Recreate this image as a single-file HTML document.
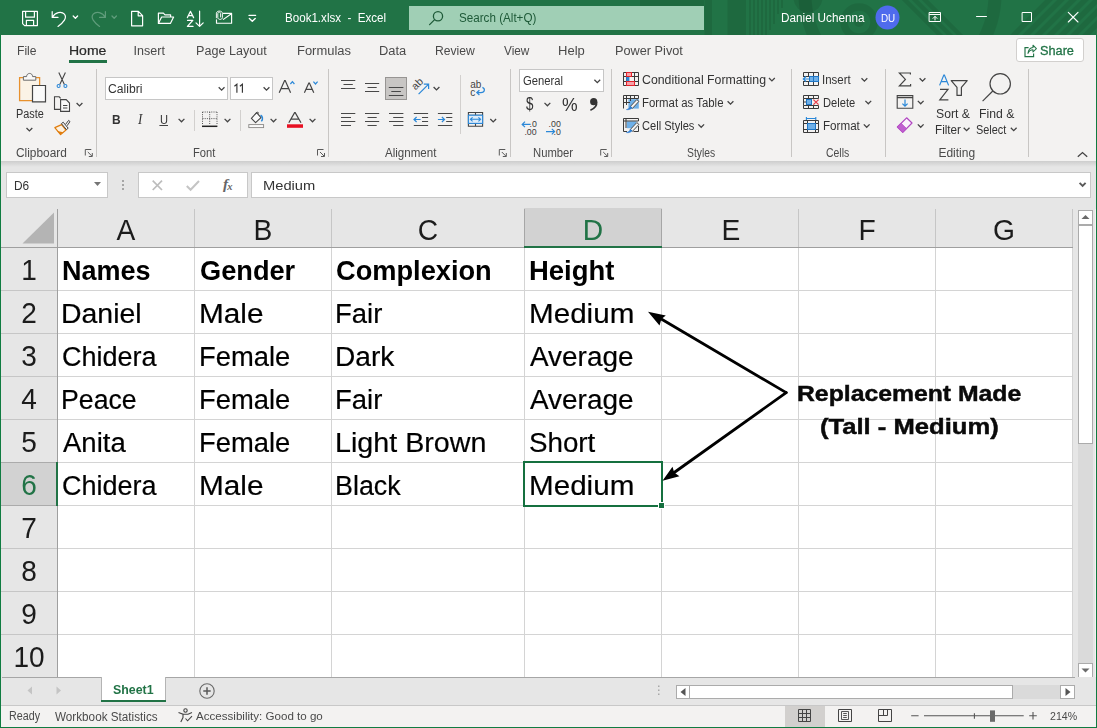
<!DOCTYPE html>
<html><head><meta charset="utf-8"><title>Book1.xlsx - Excel</title>
<style>
*{box-sizing:border-box;margin:0;padding:0}
html,body{width:1097px;height:728px;overflow:hidden;background:#f3f2f1;font-family:"Liberation Sans",sans-serif;}
#win{position:relative;width:1097px;height:728px;overflow:hidden;background:#f3f2f1}
.a{position:absolute}
.t{position:absolute;white-space:pre;line-height:1;transform-origin:0 50%;color:#262626}
.gs{position:absolute;left:0;top:0;width:1097px;height:728px;will-change:transform}
svg{position:absolute;overflow:visible}
.sep{position:absolute;width:1px;background:#c8c6c4}
.box{position:absolute;background:#fff;border:1px solid #c6c6c6}
.gl{position:absolute;background:#d4d4d4}
</style></head><body><div id="win">

<!-- ===== title bar ===== -->
<div class="a" style="left:0;top:0;width:1097px;height:35px;background:#217346"></div>
<div class="a" style="left:409px;top:6px;width:295px;height:24px;background:#a0cfb5"></div>
<svg style="left:0;top:0" width="1097" height="35"><defs><clipPath id="tbc"><rect x="0" y="0" width="1097" height="35"/></clipPath></defs>
<g clip-path="url(#tbc)" fill="rgba(0,0,0,.085)" stroke="none">
<rect x="640" y="0" width="64" height="6"/><rect x="704.5" y="0" width="7.5" height="35"/><rect x="727.5" y="0" width="18.5" height="35"/>
<rect x="749" y="0" width="2" height="35"/><rect x="753" y="0" width="2" height="35"/><rect x="757" y="0" width="2" height="35"/><rect x="761" y="0" width="2" height="35"/><rect x="765" y="0" width="2" height="35"/><rect x="769" y="0" width="2" height="30"/><rect x="773" y="0" width="2" height="24"/><rect x="777" y="0" width="2" height="14"/><rect x="781" y="0" width="2" height="8"/>
<circle cx="808" cy="-2" r="14.5"/>
<circle cx="859" cy="22" r="5"/>
<g fill="none" stroke="rgba(0,0,0,.085)"><circle cx="859" cy="22" r="15" stroke-width="7.5"/>
<circle cx="900" cy="-5" r="95" stroke-width="13"/>
<path d="M903 -2L942 37M913 -2L952 37M923 -2L962 37" stroke-width="4.5"/>
<path d="M1012 37L1051 -2M1024 37L1063 -2M1036 37L1075 -2M1048 37L1087 -2M1060 37L1099 -2M1072 37L1111 -2M1084 37L1123 -2" stroke-width="5.5"/></g>
</g></svg>
<svg style="left:0;top:0" width="1097" height="35"><g fill="none" stroke="#fff" stroke-width="1.2" stroke-linejoin="round" stroke-linecap="round">
<!-- save -->
<path d="M22.6 11.4H37.4V25.6H24.6L22.6 23.6ZM25.6 11.4V17.2H34.4V11.4M26.4 25.6V20.4H33.6V25.6"/>
<!-- undo -->
<path d="M52.2 11.6V17.4H58M52.4 17.2C55 12.4 61.4 10.8 64.4 14.2C67.4 17.8 63.6 22.2 58 26.4"/>
<path d="M73.2 16L75.4 18.2L77.6 16" stroke-width="1.3"/>
<!-- redo dim -->
<g stroke="#5f9c7b"><path d="M105.4 11.6V17.4H99.6M105.2 17.2C102.6 12.4 96.2 10.8 93.2 14.2C90.2 17.8 94 22.2 99.6 26.4"/><path d="M112 16L114.2 18.2L116.4 16" stroke-width="1.3"/></g>
<!-- new -->
<path d="M131.6 11.4H138.4L142.6 15.6V25.8H131.6ZM138.2 11.6V15.8H142.4"/>
<!-- open -->
<path d="M158.4 23.4V13.2H163.4L165 14.8H170.6V17M158.4 23.4L161.6 17H173.6L170.4 23.4Z"/>
<!-- sort az -->
<path d="M199.6 11.2V26.2M196 22.8L199.6 26.4L203.2 22.8"/>
<path d="M187.4 17.6L190.4 11.4L193.6 17.6M188.4 15.6H192.6M187.6 20.4H192.8L187.4 26.4H193" stroke-width="1.25"/>
<!-- mail attach -->
<path d="M223.4 13.4H231.6V23.2H216.5V19.8M223.4 19.4L231.4 13.8" stroke-width="1.15"/>
<path d="M220.6 17V13.6C220.6 11.6 217.8 11.6 217.8 13.6V17.6C217.8 20 222.4 20 222.4 17.6V13.2C222.4 10.4 216.4 10.4 216.4 13.2V17.8" stroke-width="0.95"/>
<!-- customize -->
<path d="M249 15.4H255.6" stroke-width="1.3"/><path d="M249.4 18.4L252.3 21.2L255.2 18.4" stroke-width="1.4"/>
<!-- search -->
<g stroke="#1e5a38" stroke-width="1.3"><circle cx="438" cy="16.2" r="4.6"/><path d="M434.6 19.6L429.6 24.6"/></g>
<!-- window controls -->
<path d="M929.5 12.5H940.5V21.5H929.5ZM929.5 14.5H940.5M935 20V16.6M933 18.4L935 16.4L937 18.4" stroke-width="1"/>
<path d="M976.5 16.5H986.5" stroke-width="1"/>
<path d="M1022.5 12.5H1031.5V21.5H1022.5Z" stroke-width="1"/>
<path d="M1068.3 12.3L1078 22M1078 12.3L1068.3 22" stroke-width="1.1"/>
</g>
<circle cx="887.5" cy="17.5" r="12" fill="#4f6bed"/>
</svg>


<!-- ===== ribbon ===== -->
<div class="a" style="left:0;top:35px;width:1097px;height:126px;background:#f3f2f1"></div>
<div class="a" style="left:69px;top:60px;width:38px;height:3px;background:#217346"></div>
<div class="a" style="left:1016px;top:38px;width:68px;height:24px;background:#fff;border:1px solid #d2d0ce;border-radius:3px"></div>
<div class="sep" style="left:96px;top:69px;height:88px"></div>
<div class="sep" style="left:328px;top:69px;height:88px"></div>
<div class="sep" style="left:510px;top:69px;height:88px"></div>
<div class="sep" style="left:611px;top:69px;height:88px"></div>
<div class="sep" style="left:791px;top:69px;height:88px"></div>
<div class="sep" style="left:885px;top:69px;height:88px"></div>
<div class="sep" style="left:1028px;top:69px;height:88px"></div>
<div class="sep" style="left:194px;top:110px;height:21px;background:#d2d0ce"></div>
<div class="sep" style="left:240px;top:110px;height:21px;background:#d2d0ce"></div>
<div class="sep" style="left:460px;top:75px;height:59px;background:#d2d0ce"></div>
<div class="box" style="left:105px;top:77px;width:123px;height:23px"></div>
<div class="box" style="left:230px;top:77px;width:43px;height:23px"></div>
<div class="box" style="left:519px;top:69px;width:85px;height:23px"></div>
<div class="a" style="left:385px;top:77px;width:22px;height:23px;background:#c8c6c4;border:1px solid #979593"></div>
<svg style="left:0;top:0" width="1097" height="165">

<!-- chevrons -->
<path d="M-2.9 -1.4L0 1.5L2.9 -1.4" fill="none" stroke="#444" stroke-width="1.3" transform="translate(29.4 129.4)"/><path d="M-2.9 -1.4L0 1.5L2.9 -1.4" fill="none" stroke="#444" stroke-width="1.3" transform="translate(79.5 104.4)"/>
<path d="M-2.9 -1.4L0 1.5L2.9 -1.4" fill="none" stroke="#444" stroke-width="1.3" transform="translate(221.6 88.7)"/><path d="M-2.9 -1.4L0 1.5L2.9 -1.4" fill="none" stroke="#444" stroke-width="1.3" transform="translate(266.5 88.7)"/>
<path d="M-2.9 -1.4L0 1.5L2.9 -1.4" fill="none" stroke="#444" stroke-width="1.3" transform="translate(181.5 120.3)"/><path d="M-2.9 -1.4L0 1.5L2.9 -1.4" fill="none" stroke="#444" stroke-width="1.3" transform="translate(227.5 120.3)"/><path d="M-2.9 -1.4L0 1.5L2.9 -1.4" fill="none" stroke="#444" stroke-width="1.3" transform="translate(273.5 120.3)"/><path d="M-2.9 -1.4L0 1.5L2.9 -1.4" fill="none" stroke="#444" stroke-width="1.3" transform="translate(312.5 120.3)"/>
<path d="M-2.9 -1.4L0 1.5L2.9 -1.4" fill="none" stroke="#444" stroke-width="1.3" transform="translate(436.5 88.4)"/><path d="M-2.9 -1.4L0 1.5L2.9 -1.4" fill="none" stroke="#444" stroke-width="1.3" transform="translate(493.2 120.4)"/>
<path d="M-2.9 -1.4L0 1.5L2.9 -1.4" fill="none" stroke="#444" stroke-width="1.3" transform="translate(597.3 81.2)"/><path d="M-2.9 -1.4L0 1.5L2.9 -1.4" fill="none" stroke="#444" stroke-width="1.3" transform="translate(547.4 104.3)"/>
<path d="M-2.9 -1.4L0 1.5L2.9 -1.4" fill="none" stroke="#444" stroke-width="1.3" transform="translate(771.9 79.4)"/><path d="M-2.9 -1.4L0 1.5L2.9 -1.4" fill="none" stroke="#444" stroke-width="1.3" transform="translate(730.5 102.6)"/><path d="M-2.9 -1.4L0 1.5L2.9 -1.4" fill="none" stroke="#444" stroke-width="1.3" transform="translate(701.2 125.8)"/>
<path d="M-2.9 -1.4L0 1.5L2.9 -1.4" fill="none" stroke="#444" stroke-width="1.3" transform="translate(864.4 79.6)"/><path d="M-2.9 -1.4L0 1.5L2.9 -1.4" fill="none" stroke="#444" stroke-width="1.3" transform="translate(868.3 102.3)"/><path d="M-2.9 -1.4L0 1.5L2.9 -1.4" fill="none" stroke="#444" stroke-width="1.3" transform="translate(866.7 125.8)"/>
<path d="M-2.9 -1.4L0 1.5L2.9 -1.4" fill="none" stroke="#444" stroke-width="1.3" transform="translate(922.5 79.6)"/><path d="M-2.9 -1.4L0 1.5L2.9 -1.4" fill="none" stroke="#444" stroke-width="1.3" transform="translate(920.7 102.3)"/><path d="M-2.9 -1.4L0 1.5L2.9 -1.4" fill="none" stroke="#444" stroke-width="1.3" transform="translate(920.7 125.8)"/>
<path d="M-2.9 -1.4L0 1.5L2.9 -1.4" fill="none" stroke="#444" stroke-width="1.3" transform="translate(966.6 129.2)"/><path d="M-2.9 -1.4L0 1.5L2.9 -1.4" fill="none" stroke="#444" stroke-width="1.3" transform="translate(1013.7 129.2)"/>
<!-- dialog launchers -->
<path d="M-3.5 2.5V-3.5H2.5M-1 -1L3.2 3.2M0 3.5H3.5V0" fill="none" stroke="#5a5a5a" stroke-width="1" transform="translate(88.8 153)"/><path d="M-3.5 2.5V-3.5H2.5M-1 -1L3.2 3.2M0 3.5H3.5V0" fill="none" stroke="#5a5a5a" stroke-width="1" transform="translate(321 153)"/><path d="M-3.5 2.5V-3.5H2.5M-1 -1L3.2 3.2M0 3.5H3.5V0" fill="none" stroke="#5a5a5a" stroke-width="1" transform="translate(502.8 153)"/><path d="M-3.5 2.5V-3.5H2.5M-1 -1L3.2 3.2M0 3.5H3.5V0" fill="none" stroke="#5a5a5a" stroke-width="1" transform="translate(604.2 153)"/>
<!-- collapse ribbon -->
<path d="M1077.8 156.8L1082.5 152.6L1087.2 156.8" fill="none" stroke="#444" stroke-width="1.3"/>
<!-- ===== clipboard ===== -->
<path d="M23.5 77.6H19.6V100.6H32M36 77.6H39.6V85" fill="none" stroke="#e8912d" stroke-width="1.3"/>
<path d="M21 79H38.5V85H32V99.4H21Z" fill="#fbf3e6"/>
<path d="M23.4 80.2V76.6H26.6C26.6 72.4 32.6 72.4 32.6 76.6H35.8V80.2Z" fill="#f8f8f8" stroke="#6a6a6a" stroke-width="1"/>
<path d="M32.5 85.5H45.5V101.9H32.5Z" fill="#fafafa" stroke="#444" stroke-width="1.2"/>
<!-- scissors -->
<path d="M58.8 72.6L64.4 84.4M65.4 72.6L59.8 84.4" fill="none" stroke="#444" stroke-width="1.1"/>
<circle cx="58.6" cy="86" r="1.5" fill="none" stroke="#2b88d8" stroke-width="1.1"/><circle cx="65.4" cy="86" r="1.5" fill="none" stroke="#2b88d8" stroke-width="1.1"/>
<!-- copy -->
<path d="M60.4 109.4H54.5V96.8H59.2L60.6 98.4" fill="none" stroke="#444" stroke-width="1.1"/>
<path d="M60.6 99.6H66.2L69.5 103V111.4H60.6Z" fill="#fafafa" stroke="#444" stroke-width="1.1"/><path d="M63 105.5H67.4M63 108H67.4" stroke="#444" stroke-width="1"/>
<!-- format painter -->
<path d="M54.8 127.6L61.6 124.6L66 130L60.6 134.6Z" fill="#fdf1df" stroke="#e07c0c" stroke-width="1.2" stroke-linejoin="round"/><path d="M57.2 131L60.6 134.4L63.4 132.2Z" fill="#e07c0c"/>
<path d="M61.4 123.6L63.2 122.2L68.2 128.2L66.4 129.6Z" fill="#f3f2f1" stroke="#444" stroke-width="1"/><path d="M65.4 124.6L68.6 120.4L70 121.6L67 125.8" fill="#f3f2f1" stroke="#444" stroke-width="1"/>
<!-- ===== font ===== -->
<path d="M279.2 92.8L284.6 80.6H285.2L290.6 92.8M281.2 88.6H288.6" fill="none" stroke="#444" stroke-width="1.2"/>
<path d="M290.4 84L292.4 81.6L294.4 84" fill="none" stroke="#2b88d8" stroke-width="1.2"/>
<path d="M304.4 92.8L308.8 83H309.4L313.8 92.8M306 89.4H312.2" fill="none" stroke="#444" stroke-width="1.2"/>
<path d="M313.4 81.6L315.5 84L317.6 81.6" fill="none" stroke="#2b88d8" stroke-width="1.2"/>
<path d="M159.4 125.5H168" stroke="#444" stroke-width="1"/>
<!-- eleven --><path d="M234.4 86.2L236.9 84.2V92.8M239.9 86.2L242.4 84.2V92.8" fill="none" stroke="#333" stroke-width="1.15"/>
<!-- borders -->
<path d="M202.5 112H217M202.5 112V125M217 112V125M209.7 112V125M202.5 118.6H217" fill="none" stroke="#555" stroke-width="1" stroke-dasharray="1 1.2"/>
<path d="M202 126.3H217.4" stroke="#222" stroke-width="1.5"/>
<!-- fill bucket -->
<path d="M251.4 118.4L256.6 112.6L261 117.6L255.6 122.6Z" fill="#fafafa" stroke="#444" stroke-width="1.1" stroke-linejoin="round"/><path d="M255 114.4L257.4 112L259 113.4" fill="none" stroke="#444" stroke-width="1"/>
<path d="M261.4 121.4C263.2 119 262.6 116.4 260.6 115.2" fill="none" stroke="#2b88d8" stroke-width="1.5"/>
<rect x="248.8" y="124.6" width="14.8" height="3" fill="#fafafa" stroke="#8a8886" stroke-width="0.9"/>
<!-- font color -->
<path d="M288.8 122.8L294.6 112.6H295.2L301 122.8M291 119.2H298.8" fill="none" stroke="#444" stroke-width="1.2"/>
<rect x="287" y="124.3" width="16" height="3.5" fill="#e81123"/>
<!-- ===== alignment ===== -->
<g stroke="#484848" stroke-width="1" fill="none">
<path d="M341 80.5H355.3M343.5 84.5H352.8M341 88.5H355.3"/>
<path d="M365 83.5H379.2M367.5 87.5H376.7M365 91.5H379.2"/>
<path d="M388.8 87.5H403.4M391.3 91.5H400.9M388.8 95.5H403.4"/>
<path d="M341 113.5H355.3M341 117.5H351M341 121.5H355.3M341 125.5H351"/>
<path d="M365 113.5H379.2M367.5 117.5H376.7M365 121.5H379.2M367.5 125.5H376.7"/>
<path d="M389 113.5H403.4M393.2 117.5H403.4M389 121.5H403.4M393.2 125.5H403.4"/>
<path d="M413.8 113.5H428.1M422 117.5H428.1M422 121.5H428.1M413.8 125.5H428.1"/>
<path d="M437.9 113.5H452.3M446.2 117.5H452.3M446.2 121.5H452.3M437.9 125.5H452.3"/>
</g>
<g stroke="#2b88d8" stroke-width="1.2" fill="none">
<path d="M420.6 119.5H414.2M416.6 117L414 119.5L416.6 122"/>
<path d="M437.9 119.5H444.3M441.9 117L444.5 119.5L441.9 122"/>
<path d="M418.6 94.2L428.4 84.4M423.8 84.2H428.6V89"/>
</g>
<text x="0" y="0" transform="translate(415.6 90.4) rotate(-45)" font-family="Liberation Sans" font-size="10.5" fill="#444">ab</text>
<!-- wrap -->
<text x="470.2" y="88" font-family="Liberation Sans" font-size="10" fill="#444">ab</text>
<text x="470.2" y="95.6" font-family="Liberation Sans" font-size="10" fill="#444">c</text>
<path d="M482.4 87.4C485.4 88.6 485 92.6 481 92.6H477M479.4 90.2L476.8 92.6L479.4 95" fill="none" stroke="#2b88d8" stroke-width="1.2"/>
<!-- merge -->
<path d="M468.4 112.5H482.6V126.2H468.4ZM468.4 115.2H482.6M468.4 123.4H482.6M475.5 112.5V115.2M475.5 123.4V126.2" fill="none" stroke="#444" stroke-width="1.1"/>
<rect x="468.4" y="115.2" width="14.2" height="8.2" fill="#deecf9" stroke="#2b88d8" stroke-width="1.1"/>
<path d="M470.6 119.3H480.4M472.6 117.3L470.4 119.3L472.6 121.3M478.4 117.3L480.6 119.3L478.4 121.3" fill="none" stroke="#2b88d8" stroke-width="1.1"/>
<!-- ===== number ===== -->
<path d="M590.4 110.2C595 108.2 597 104.6 596.6 101.8" fill="none" stroke="#333" stroke-width="1.6"/><circle cx="593.7" cy="101.7" r="3.6" fill="#333"/>
<g font-family="Liberation Sans" font-size="8.8" fill="#3c3c3c"><text x="529.6" y="126.6">.0</text><text x="524.4" y="135">.00</text><text x="548.6" y="126.6">.00</text><text x="553.6" y="135">.0</text></g>
<path d="M530.6 124.4H522.4M525 121.6L522.2 124.4L525 127.2" fill="none" stroke="#2b88d8" stroke-width="1.2"/>
<path d="M546 131.6H554.4M551.8 128.8L554.6 131.6L551.8 134.4" fill="none" stroke="#2b88d8" stroke-width="1.2"/>
<!-- ===== styles ===== -->
<path d="M623.5 72.5H638.5V85.5H623.5ZM626.5 72.5V85.5M634.5 72.5V85.5M623.5 76.5H626.5M623.5 81.5H626.5M634.5 76.5H638.5M634.5 81.5H638.5M631.5 72.5V76.5M630 76.5H634.5" fill="none" stroke="#3b3b3b" stroke-width="1"/>
<rect x="626.5" y="72.5" width="5" height="4" fill="#f6a1a8" stroke="#e3242d" stroke-width="1"/>
<rect x="626.5" y="81.5" width="8" height="4" fill="#f6a1a8" stroke="#e3242d" stroke-width="1"/>
<rect x="626.2" y="77" width="3.2" height="4" fill="#2b88d8"/>
<!-- table -->
<rect x="628.4" y="99.2" width="10.4" height="9.4" fill="#6fb0e8"/>
<path d="M623.5 108.5V95.5H638.5V98.5M623.5 98.5H638.5M623.5 102.5H630M626.5 95.5V105M630.5 95.5V101M634.5 95.5V98.5" fill="none" stroke="#3b3b3b" stroke-width="1"/>
<path d="M630.2 106.6L636.8 99.6L638.9 101.4L632.4 108.4Z" fill="#f3f2f1" stroke="#3b3b3b" stroke-width=".9" stroke-linejoin="round"/>
<path d="M626.4 109.6C628 110 631.6 109.4 632 107.6L630.4 106.4C629.6 108.2 628 109 626.4 109.6Z" fill="#2b7cd3" stroke="#2b7cd3" stroke-width=".6"/>
<!-- cell styles -->
<rect x="626.8" y="121.4" width="9.6" height="6.8" fill="#6fb0e8"/>
<path d="M623.5 131.5V118.5H638.5V121M623.5 121H638.5M626 118.5V128M623.5 131.5H627M633.5 131.5H638.5V126" fill="none" stroke="#3b3b3b" stroke-width="1"/>
<path d="M630.2 129.6L636.8 122.6L638.9 124.4L632.4 131.4Z" fill="#f3f2f1" stroke="#3b3b3b" stroke-width=".9" stroke-linejoin="round"/>
<path d="M626.4 132.6C628 133 631.6 132.4 632 130.6L630.4 129.4C629.6 131.2 628 132 626.4 132.6Z" fill="#2b7cd3" stroke="#2b7cd3" stroke-width=".6"/>
<!-- ===== cells ===== -->
<path d="M803.5 72.5H818.5V85.5H803.5ZM803.5 76.5H818.5M803.5 81.5H818.5M808.5 72.5V76.5M813.5 72.5V76.5M808.5 81.5V85.5M813.5 81.5V85.5" fill="none" stroke="#3b3b3b" stroke-width="1"/>
<rect x="803" y="77" width="6.4" height="4" fill="#f3f2f1"/>
<rect x="809.5" y="76.5" width="9" height="5" fill="#6fb0e8" stroke="#1f75c4" stroke-width="1"/><path d="M813.5 76.5V81.5" stroke="#1f75c4" stroke-width="1"/>
<path d="M809.6 79H803.4M806 76.5L803.3 79L806 81.5" fill="none" stroke="#2b88d8" stroke-width="1.2"/>
<path d="M803.5 95.5H818.5V98.5H803.5ZM803.5 105.5H818.5V108.5H803.5ZM803.5 98.5V105.5M808.5 95.5V98.5M813.5 95.5V98.5M808.5 105.5V108.5M813.5 105.5V108.5M803.5 102H806.5" fill="none" stroke="#3b3b3b" stroke-width="1"/>
<rect x="806.5" y="99.5" width="5" height="5" fill="#6fb0e8" stroke="#1f75c4" stroke-width="1"/>
<path d="M813.4 99.6L818.6 104.6M818.6 99.6L813.4 104.6" fill="none" stroke="#e8404c" stroke-width="1.3"/>
<path d="M803.5 120.5H818.5V132.5H803.5ZM803.5 123.5H818.5M803.5 129.5H818.5M807.5 120.5V132.5M815.5 120.5V132.5" fill="none" stroke="#3b3b3b" stroke-width="1"/>
<rect x="807.5" y="123.5" width="8" height="6" fill="#6fb0e8" stroke="#1f75c4" stroke-width="1"/>
<path d="M806.4 118.5H815.8M806.4 117V120M815.8 117V120" fill="none" stroke="#2b88d8" stroke-width="1.1"/>
<!-- ===== editing ===== -->
<path d="M910.4 74.6V73H899.4L905.4 79.4L899.4 85.8H910.6V84" fill="none" stroke="#444" stroke-width="1.2"/>
<path d="M897.2 95.6H912.8V108.2H897.2ZM897.2 97.6H912.8" fill="none" stroke="#444" stroke-width="1.1"/>
<path d="M905 99.6V106M902.4 103.6L905 106.2L907.6 103.6" fill="none" stroke="#2b88d8" stroke-width="1.2"/>
<path d="M897.4 127L906.6 117.8L912 123L902.8 132.4Z" fill="#fbf2fc" stroke="#b146c2" stroke-width="1.2" stroke-linejoin="round"/><path d="M897.4 127L901.2 123.2L906.6 128.6L902.8 132.4Z" fill="#c05fcf" stroke="#b146c2" stroke-width=".6"/>
<path d="M939.6 85.4L943.8 75H944.4L948.6 85.4M941.2 81.6H947" fill="none" stroke="#2b88d8" stroke-width="1.2"/>
<path d="M940 89.4H948L939.8 99.8H948.4" fill="none" stroke="#444" stroke-width="1.2"/>
<path d="M951.2 80.6H967.2L961.4 87.4V95.4H957V87.4Z" fill="none" stroke="#444" stroke-width="1.2" stroke-linejoin="round"/>
<circle cx="1000.2" cy="83.8" r="10.2" fill="none" stroke="#444" stroke-width="1.2"/><path d="M992.8 91L982.6 101.2" stroke="#444" stroke-width="1.2"/>
 <!-- share icon -->
<path d="M1028.6 47.6H1025V56.6H1033.6V53.6" fill="none" stroke="#217346" stroke-width="1.15"/>
<path d="M1028 53.4C1028.4 49.8 1030.4 47.8 1033 47.6V45.2L1036.4 48.6L1033 52V49.8C1030.8 49.8 1029.2 50.8 1028 53.4Z" fill="none" stroke="#217346" stroke-width="1.05" stroke-linejoin="round"/>

</svg>


<!-- shadow under ribbon + formula bar -->
<div class="a" style="left:0;top:161px;width:1097px;height:48px;background:#e6e6e6"></div>
<div class="a" style="left:0;top:161px;width:1097px;height:6px;background:linear-gradient(#cdcdcd,#e6e6e6)"></div>
<div class="box" style="left:6px;top:172px;width:102px;height:26px;border-color:#c8c8c8"></div>
<svg style="left:94px;top:182px" width="8" height="5"><path d="M0 0H7L3.5 4Z" fill="#757575"/></svg>
<svg style="left:122px;top:180px" width="2" height="10"><g fill="#a6a6a6"><rect x="0" y="0" width="2" height="2"/><rect x="0" y="4" width="2" height="2"/><rect x="0" y="8" width="2" height="2"/></g></svg>
<div class="box" style="left:138px;top:172px;width:110px;height:26px;border-color:#c8c8c8"></div>
<svg style="left:152px;top:180px" width="11" height="11"><path d="M0.7 0.7L10 10M10 0.7L0.7 10" stroke="#bdbdbd" stroke-width="1.7" fill="none"/></svg>
<svg style="left:186px;top:180px" width="14" height="11"><path d="M0.8 6L4.6 9.8L13 1" stroke="#c4c4c4" stroke-width="2" fill="none"/></svg>
<span class="t" style="left:223px;top:176px;font-size:15.5px;font-style:italic;font-weight:bold;font-family:'Liberation Serif',serif;color:#666">f<span style="font-size:10.5px;position:relative;top:0.5px;left:-1px">x</span></span>
<div class="box" style="left:251px;top:172px;width:840px;height:26px;border-color:#c8c8c8"></div>
<svg style="left:1079px;top:182px" width="9" height="6"><path d="M0.6 0.8L3.6 3.9L6.6 0.8" stroke="#5a5a5a" stroke-width="1.9" fill="none"/></svg>


<!-- ===== grid ===== -->
<div class="a" style="left:1px;top:208px;width:1074px;height:40px;background:#e6e6e6"></div>
<div class="a" style="left:1px;top:247px;width:57px;height:430px;background:#e6e6e6"></div>
<div class="a" style="left:58px;top:248px;width:1016px;height:429px;background:#fff"></div>
<div class="a" style="left:524px;top:208px;width:138px;height:38px;background:#d2d2d2"></div>
<div class="a" style="left:1px;top:462px;width:56px;height:44px;background:#d2d2d2"></div>
<div class="a" style="left:194px;top:248px;width:1px;height:429px;background:#d4d4d4"></div>
<div class="a" style="left:331px;top:248px;width:1px;height:429px;background:#d4d4d4"></div>
<div class="a" style="left:524px;top:248px;width:1px;height:429px;background:#d4d4d4"></div>
<div class="a" style="left:661px;top:248px;width:1px;height:429px;background:#d4d4d4"></div>
<div class="a" style="left:798px;top:248px;width:1px;height:429px;background:#d4d4d4"></div>
<div class="a" style="left:935px;top:248px;width:1px;height:429px;background:#d4d4d4"></div>
<div class="a" style="left:1072px;top:248px;width:1px;height:429px;background:#d4d4d4"></div>
<div class="a" style="left:58px;top:290px;width:1015px;height:1px;background:#d4d4d4"></div>
<div class="a" style="left:58px;top:333px;width:1015px;height:1px;background:#d4d4d4"></div>
<div class="a" style="left:58px;top:376px;width:1015px;height:1px;background:#d4d4d4"></div>
<div class="a" style="left:58px;top:419px;width:1015px;height:1px;background:#d4d4d4"></div>
<div class="a" style="left:58px;top:462px;width:1015px;height:1px;background:#d4d4d4"></div>
<div class="a" style="left:58px;top:505px;width:1015px;height:1px;background:#d4d4d4"></div>
<div class="a" style="left:58px;top:548px;width:1015px;height:1px;background:#d4d4d4"></div>
<div class="a" style="left:58px;top:591px;width:1015px;height:1px;background:#d4d4d4"></div>
<div class="a" style="left:58px;top:634px;width:1015px;height:1px;background:#d4d4d4"></div>
<div class="a" style="left:194px;top:209px;width:1px;height:38px;background:#c6c6c6"></div>
<div class="a" style="left:331px;top:209px;width:1px;height:38px;background:#c6c6c6"></div>
<div class="a" style="left:524px;top:209px;width:1px;height:38px;background:#c6c6c6"></div>
<div class="a" style="left:661px;top:209px;width:1px;height:38px;background:#c6c6c6"></div>
<div class="a" style="left:798px;top:209px;width:1px;height:38px;background:#c6c6c6"></div>
<div class="a" style="left:935px;top:209px;width:1px;height:38px;background:#c6c6c6"></div>
<div class="a" style="left:1072px;top:209px;width:1px;height:38px;background:#c6c6c6"></div>
<div class="a" style="left:1px;top:290px;width:56px;height:1px;background:#c6c6c6"></div>
<div class="a" style="left:1px;top:333px;width:56px;height:1px;background:#c6c6c6"></div>
<div class="a" style="left:1px;top:376px;width:56px;height:1px;background:#c6c6c6"></div>
<div class="a" style="left:1px;top:419px;width:56px;height:1px;background:#c6c6c6"></div>
<div class="a" style="left:1px;top:462px;width:56px;height:1px;background:#c6c6c6"></div>
<div class="a" style="left:1px;top:505px;width:56px;height:1px;background:#c6c6c6"></div>
<div class="a" style="left:1px;top:548px;width:56px;height:1px;background:#c6c6c6"></div>
<div class="a" style="left:1px;top:591px;width:56px;height:1px;background:#c6c6c6"></div>
<div class="a" style="left:1px;top:634px;width:56px;height:1px;background:#c6c6c6"></div>
<div class="a" style="left:1px;top:247px;width:1074px;height:1px;background:#9f9f9f"></div>
<div class="a" style="left:1074px;top:247px;width:1px;height:431px;background:#9f9f9f"></div>
<div class="a" style="left:57px;top:209px;width:1px;height:468px;background:#9f9f9f"></div>
<div class="a" style="left:524px;top:209px;width:1px;height:38px;background:#a6a6a6"></div>
<div class="a" style="left:661px;top:209px;width:1px;height:38px;background:#a6a6a6"></div>
<div class="a" style="left:1px;top:462px;width:56px;height:1px;background:#ababab"></div>
<div class="a" style="left:1px;top:505px;width:56px;height:1px;background:#ababab"></div>
<div class="a" style="left:524px;top:246px;width:138px;height:2px;background:#217346"></div>
<div class="a" style="left:56px;top:462px;width:2px;height:44px;background:#217346"></div>
<svg style="left:22px;top:212px" width="33" height="32"><path d="M32 0.5V31.5H0.5Z" fill="#b4b4b4"/></svg>
<div class="a" style="left:523px;top:461px;width:140px;height:46px;border:2px solid #15703f"></div>
<div class="a" style="left:658px;top:502px;width:7px;height:7px;background:#15703f;border:1px solid #fff"></div>
<svg style="left:0;top:0" width="1097" height="728"><g stroke="#000" stroke-width="2.8" fill="none" stroke-linecap="round"><path d="M786.2 392.6L660 318.2"/><path d="M786.2 392.6L673.5 473"/></g>
<path d="M648 311.8L665.8 315.4L661.4 319L659.5 325.5Z" fill="#000"/><path d="M662.5 480.7L672.5 466.8L674.2 472.6L679.4 476.2Z" fill="#000"/></svg>
<div class="a" style="left:1073px;top:208px;width:22px;height:470px;background:#e6e6e6"></div>
<div class="a" style="left:1078px;top:210px;width:15px;height:468px;background:#dadada"></div>
<div class="a" style="left:1078px;top:210px;width:15px;height:15px;background:#fff;border:1px solid #ababab"></div>
<div class="a" style="left:1078px;top:225px;width:15px;height:219px;background:#fff;border:1px solid #ababab"></div>
<div class="a" style="left:1078px;top:663px;width:15px;height:15px;background:#fff;border:1px solid #ababab"></div>
<svg style="left:1081px;top:214px" width="9" height="6"><path d="M0.5 5H8.5L4.5 1Z" fill="#6a6a6a"/></svg>
<svg style="left:1081px;top:668px" width="9" height="6"><path d="M0.5 0.5H8.5L4.5 4.5Z" fill="#6a6a6a"/></svg>

<!-- ===== sheet tabs / status ===== -->
<div class="a" style="left:1px;top:677px;width:1095px;height:29px;background:#e6e6e6"></div>
<div class="a" style="left:2px;top:677px;width:1073px;height:1px;background:#a6a6a6"></div>
<div class="a" style="left:101px;top:677px;width:65px;height:25px;background:#fff;border-left:1px solid #b4b4b4;border-right:1px solid #b4b4b4"></div>
<div class="a" style="left:101px;top:700px;width:65px;height:2px;background:#217346"></div>
<svg style="left:27px;top:686px" width="6" height="10"><path d="M5 0.5V8.5L0.5 4.5Z" fill="#c4c4c4"/></svg>
<svg style="left:56px;top:686px" width="6" height="10"><path d="M0.5 0.5V8.5L5 4.5Z" fill="#c4c4c4"/></svg>
<svg style="left:199px;top:683px" width="16" height="16"><circle cx="8" cy="8" r="7.2" fill="none" stroke="#6a6a6a" stroke-width="1.1"/><path d="M4.3 8H11.7M8 4.3V11.7" stroke="#5a5a5a" stroke-width="1.5"/></svg>
<svg style="left:657px;top:685px" width="4" height="12"><g fill="#a8a8a8"><rect x="1" y="0.5" width="1.5" height="1.5"/><rect x="1" y="4.5" width="1.5" height="1.5"/><rect x="1" y="8.5" width="1.5" height="1.5"/></g></svg>
<!-- h scrollbar -->
<div class="a" style="left:676px;top:685px;width:399px;height:14px;background:#dadada"></div>
<div class="a" style="left:676px;top:685px;width:14px;height:14px;background:#fff;border:1px solid #ababab"></div>
<div class="a" style="left:689px;top:685px;width:324px;height:14px;background:#fff;border:1px solid #ababab"></div>
<div class="a" style="left:1060px;top:685px;width:15px;height:14px;background:#fff;border:1px solid #ababab"></div>
<svg style="left:680px;top:688px" width="6" height="9"><path d="M5.5 0V8L0.5 4Z" fill="#555"/></svg>
<svg style="left:1065px;top:688px" width="6" height="9"><path d="M0.5 0V8L5.5 4Z" fill="#555"/></svg>
<!-- status bar -->
<div class="a" style="left:1px;top:705px;width:1095px;height:1px;background:#c8c8c8"></div>
<div class="a" style="left:1px;top:706px;width:1095px;height:21px;background:#f3f2f1"></div>
<div class="a" style="left:785px;top:706px;width:40px;height:21px;background:#d2d0ce"></div>
<svg style="left:798px;top:709px" width="14" height="14"><path d="M0.5 0.5H12.5V12.5H0.5ZM0.5 4.5H12.5M0.5 8.5H12.5M4.5 0.5V12.5M8.5 0.5V12.5" fill="none" stroke="#444" stroke-width="1"/></svg>
<svg style="left:838px;top:709px" width="15" height="14"><path d="M0.5 0.5H13.5V12.5H0.5Z" fill="none" stroke="#444"/><path d="M3.5 2.5H10.5V10.5H3.5ZM5.2 4.5H8.8M5.2 6.5H8.8M5.2 8.5H8.8" fill="none" stroke="#444" stroke-width=".9"/></svg>
<svg style="left:878px;top:709px" width="15" height="14"><path d="M0.5 0.5H13.5V12.5H0.5Z" fill="none" stroke="#444"/><path d="M5.5 0.5V6.5M9.5 0.5V6.5H0.5" fill="none" stroke="#444"/></svg>
<svg style="left:909px;top:709px" width="130" height="14"><path d="M2.2 6.7H9.6M15 6.7H114.7M65.4 4.3V9.7M120.2 6.7H127.8M124 2.9V10.5" stroke="#555" stroke-width="1.1" fill="none"/><rect x="81" y="1.4" width="5" height="11.4" fill="#6a6a6a"/></svg>
<svg style="left:177px;top:708px" width="16" height="15"><g fill="none" stroke="#444" stroke-width="1.1"><circle cx="8.5" cy="2.5" r="1.7"/><path d="M1.5 4.5L6 6.2V9.5L3.8 14M11 6.2L15 4.5M6 6.2H11"/><path d="M8.5 10.5L10.6 12.8L15 8.2"/></g></svg>


<div class="gs">
<span class="t" style="left:285.37px;top:11.75px;font-size:12.5px;color:#ffffff;transform:scaleX(0.9274);">Book1.xlsx  -  Excel</span>
<span class="t" style="left:459.20px;top:11.75px;font-size:12.5px;color:#1e5a38;transform:scaleX(0.9318);">Search (Alt+Q)</span>
<span class="t" style="left:780.96px;top:11.75px;font-size:12.5px;color:#ffffff;transform:scaleX(0.9398);">Daniel Uchenna</span>
<span class="t" style="left:880.50px;top:13.50px;font-size:10px;color:#ffffff;transform:scaleX(0.9844);">DU</span>
<span class="t" style="left:17.03px;top:44.75px;font-size:12.5px;color:#4a4a4a;transform:scaleX(0.9693);">File</span>
<span class="t" style="left:68.58px;top:44.75px;font-size:12.5px;color:#2a2a2a;transform:scaleX(1.1207);-webkit-text-stroke:0.22px #2a2a2a;">Home</span>
<span class="t" style="left:133.60px;top:44.75px;font-size:12.5px;color:#4a4a4a;">Insert</span>
<span class="t" style="left:196.49px;top:44.75px;font-size:12.5px;color:#4a4a4a;transform:scaleX(1.0068);">Page Layout</span>
<span class="t" style="left:296.96px;top:44.75px;font-size:12.5px;color:#4a4a4a;transform:scaleX(1.0365);">Formulas</span>
<span class="t" style="left:379.27px;top:44.75px;font-size:12.5px;color:#4a4a4a;transform:scaleX(1.0333);">Data</span>
<span class="t" style="left:435.23px;top:44.75px;font-size:12.5px;color:#4a4a4a;transform:scaleX(0.9717);">Review</span>
<span class="t" style="left:504.30px;top:44.75px;font-size:12.5px;color:#4a4a4a;transform:scaleX(0.9447);">View</span>
<span class="t" style="left:558.36px;top:44.75px;font-size:12.5px;color:#4a4a4a;transform:scaleX(1.0422);">Help</span>
<span class="t" style="left:615.28px;top:44.75px;font-size:12.5px;color:#4a4a4a;transform:scaleX(1.0178);">Power Pivot</span>
<span class="t" style="left:1040.00px;top:44.75px;font-size:12.5px;color:#217346;transform:scaleX(1.0178);-webkit-text-stroke:0.3px #217346;">Share</span>
<span class="t" style="left:15.50px;top:147.00px;font-size:12px;color:#4a4a4a;transform:scaleX(0.9903);">Clipboard</span>
<span class="t" style="left:192.50px;top:147.00px;font-size:12px;color:#4a4a4a;transform:scaleX(0.9320);">Font</span>
<span class="t" style="left:385.30px;top:147.00px;font-size:12px;color:#4a4a4a;transform:scaleX(0.9643);">Alignment</span>
<span class="t" style="left:532.60px;top:147.00px;font-size:12px;color:#4a4a4a;transform:scaleX(0.9395);">Number</span>
<span class="t" style="left:687.40px;top:147.00px;font-size:12px;color:#4a4a4a;transform:scaleX(0.8599);">Styles</span>
<span class="t" style="left:826.20px;top:147.00px;font-size:12px;color:#4a4a4a;transform:scaleX(0.8698);">Cells</span>
<span class="t" style="left:938.40px;top:147.00px;font-size:12px;color:#4a4a4a;">Editing</span>
<span class="t" style="left:16.30px;top:108.00px;font-size:12px;color:#333333;transform:scaleX(0.9061);">Paste</span>
<span class="t" style="left:108.30px;top:83.00px;font-size:12px;color:#333333;transform:scaleX(1.0107);">Calibri</span>
<span class="t" style="left:112.00px;top:113.00px;font-size:13px;color:#333333;font-weight:bold;transform:scaleX(0.9222);">B</span>
<span class="t" style="left:137.73px;top:112.50px;font-size:14px;color:#333333;font-style:italic;font-family:'Liberation Serif',serif;transform:scaleX(0.9286);">I</span>
<span class="t" style="left:159.50px;top:113.75px;font-size:12.5px;color:#333333;transform:scaleX(0.8889);">U</span>
<span class="t" style="left:522.50px;top:75.00px;font-size:12px;color:#333333;transform:scaleX(0.9375);">General</span>
<span class="t" style="left:525.80px;top:95.00px;font-size:18px;color:#333333;transform:scaleX(0.7400);">$</span>
<span class="t" style="left:561.50px;top:96.25px;font-size:18.5px;color:#333333;transform:scaleX(0.9500);">%</span>
<span class="t" style="left:642.30px;top:74.00px;font-size:12px;color:#333333;transform:scaleX(1.0270);">Conditional Formatting</span>
<span class="t" style="left:642.30px;top:97.00px;font-size:12px;color:#333333;transform:scaleX(0.9495);">Format as Table</span>
<span class="t" style="left:642.30px;top:120.00px;font-size:12px;color:#333333;transform:scaleX(0.9244);">Cell Styles</span>
<span class="t" style="left:821.55px;top:74.00px;font-size:12px;color:#333333;transform:scaleX(0.9536);">Insert</span>
<span class="t" style="left:822.50px;top:97.00px;font-size:12px;color:#333333;transform:scaleX(0.9282);">Delete</span>
<span class="t" style="left:822.50px;top:120.00px;font-size:12px;color:#333333;transform:scaleX(0.9697);">Format</span>
<span class="t" style="left:936.00px;top:108.00px;font-size:12px;color:#333333;transform:scaleX(1.0167);">Sort &amp;</span>
<span class="t" style="left:934.60px;top:124.00px;font-size:12px;color:#333333;transform:scaleX(0.9749);">Filter</span>
<span class="t" style="left:979.40px;top:108.00px;font-size:12px;color:#333333;transform:scaleX(1.0179);">Find &amp;</span>
<span class="t" style="left:976.00px;top:124.00px;font-size:12px;color:#333333;transform:scaleX(0.9084);">Select</span>
<span class="t" style="left:13.80px;top:180.00px;font-size:12px;color:#333333;transform:scaleX(0.9894);">D6</span>
<span class="t" style="left:263.02px;top:179.75px;font-size:12.5px;color:#333333;transform:scaleX(1.1755);">Medium</span>
<span class="t" style="left:9.00px;top:710.00px;font-size:12px;color:#4a4a4a;transform:scaleX(0.8937);">Ready</span>
<span class="t" style="left:55.00px;top:711.00px;font-size:12px;color:#4a4a4a;transform:scaleX(0.9758);">Workbook Statistics</span>
<span class="t" style="left:196.10px;top:711.25px;font-size:11.5px;color:#4a4a4a;transform:scaleX(1.0070);">Accessibility: Good to go</span>
<span class="t" style="left:1050.10px;top:711.25px;font-size:11.5px;color:#4a4a4a;transform:scaleX(0.9216);">214%</span>
<span class="t" style="left:112.80px;top:683.75px;font-size:12.5px;color:#217346;font-weight:bold;transform:scaleX(0.9893);">Sheet1</span>
<span class="t" style="left:796.60px;top:383.20px;font-size:22.6px;color:#0a0a0a;font-weight:bold;transform:scaleX(1.0955);-webkit-text-stroke:0.45px #0a0a0a;">Replacement Made</span>
<span class="t" style="left:819.57px;top:416.20px;font-size:22.6px;color:#0a0a0a;font-weight:bold;transform:scaleX(1.1332);-webkit-text-stroke:0.45px #0a0a0a;">(Tall - Medium)</span>
</div>
<span class="t" style="left:105.50px;top:214.50px;font-size:30px;color:#1c1c1c;width:40px;text-align:center;transform-origin:50% 50%;transform:scaleX(.94);">A</span>
<span class="t" style="left:242.50px;top:214.50px;font-size:30px;color:#1c1c1c;width:40px;text-align:center;transform-origin:50% 50%;transform:scaleX(.94);">B</span>
<span class="t" style="left:407.50px;top:214.50px;font-size:30px;color:#1c1c1c;width:40px;text-align:center;transform-origin:50% 50%;transform:scaleX(.94);">C</span>
<span class="t" style="left:572.50px;top:214.50px;font-size:30px;color:#217346;width:40px;text-align:center;transform-origin:50% 50%;transform:scaleX(.94);">D</span>
<span class="t" style="left:710.70px;top:214.50px;font-size:30px;color:#1c1c1c;width:40px;text-align:center;transform-origin:50% 50%;transform:scaleX(.94);">E</span>
<span class="t" style="left:846.50px;top:214.50px;font-size:30px;color:#1c1c1c;width:40px;text-align:center;transform-origin:50% 50%;transform:scaleX(.94);">F</span>
<span class="t" style="left:983.50px;top:214.50px;font-size:30px;color:#1c1c1c;width:40px;text-align:center;transform-origin:50% 50%;transform:scaleX(.94);">G</span>
<span class="t" style="left:8.50px;top:254.75px;font-size:29.5px;color:#1c1c1c;width:40px;text-align:center;transform-origin:50% 50%;transform:scaleX(.95);">1</span>
<span class="t" style="left:8.50px;top:297.75px;font-size:29.5px;color:#1c1c1c;width:40px;text-align:center;transform-origin:50% 50%;transform:scaleX(.95);">2</span>
<span class="t" style="left:8.50px;top:340.75px;font-size:29.5px;color:#1c1c1c;width:40px;text-align:center;transform-origin:50% 50%;transform:scaleX(.95);">3</span>
<span class="t" style="left:8.50px;top:383.75px;font-size:29.5px;color:#1c1c1c;width:40px;text-align:center;transform-origin:50% 50%;transform:scaleX(.95);">4</span>
<span class="t" style="left:8.50px;top:426.75px;font-size:29.5px;color:#1c1c1c;width:40px;text-align:center;transform-origin:50% 50%;transform:scaleX(.95);">5</span>
<span class="t" style="left:8.50px;top:469.75px;font-size:29.5px;color:#217346;width:40px;text-align:center;transform-origin:50% 50%;transform:scaleX(.95);">6</span>
<span class="t" style="left:8.50px;top:512.75px;font-size:29.5px;color:#1c1c1c;width:40px;text-align:center;transform-origin:50% 50%;transform:scaleX(.95);">7</span>
<span class="t" style="left:8.50px;top:555.75px;font-size:29.5px;color:#1c1c1c;width:40px;text-align:center;transform-origin:50% 50%;transform:scaleX(.95);">8</span>
<span class="t" style="left:8.50px;top:598.75px;font-size:29.5px;color:#1c1c1c;width:40px;text-align:center;transform-origin:50% 50%;transform:scaleX(.95);">9</span>
<span class="t" style="left:8.50px;top:641.75px;font-size:29.5px;color:#1c1c1c;width:40px;text-align:center;transform-origin:50% 50%;transform:scaleX(.95);">10</span>
<span class="t" style="left:62.00px;top:257.50px;font-size:27px;color:#000;font-weight:bold;">Names</span>
<span class="t" style="left:199.99px;top:257.50px;font-size:27px;color:#000;font-weight:bold;transform:scaleX(1.0072);">Gender</span>
<span class="t" style="left:336.39px;top:257.50px;font-size:27px;color:#000;font-weight:bold;transform:scaleX(1.0078);">Complexion</span>
<span class="t" style="left:529.38px;top:257.50px;font-size:27px;color:#000;font-weight:bold;transform:scaleX(1.0168);">Height</span>
<span class="t" style="left:60.90px;top:300.50px;font-size:27px;color:#000;transform:scaleX(1.0524);-webkit-text-stroke:0.2px #000;">Daniel</span>
<span class="t" style="left:198.79px;top:300.50px;font-size:27px;color:#000;transform:scaleX(1.1026);-webkit-text-stroke:0.2px #000;">Male</span>
<span class="t" style="left:335.36px;top:300.50px;font-size:27px;color:#000;transform:scaleX(1.0178);-webkit-text-stroke:0.2px #000;">Fair</span>
<span class="t" style="left:528.81px;top:300.50px;font-size:27px;color:#000;transform:scaleX(1.0968);-webkit-text-stroke:0.2px #000;">Medium</span>
<span class="t" style="left:62.00px;top:343.50px;font-size:27px;color:#000;-webkit-text-stroke:0.2px #000;">Chidera</span>
<span class="t" style="left:198.97px;top:343.50px;font-size:27px;color:#000;transform:scaleX(1.0136);-webkit-text-stroke:0.2px #000;">Female</span>
<span class="t" style="left:335.32px;top:343.50px;font-size:27px;color:#000;transform:scaleX(1.0413);-webkit-text-stroke:0.2px #000;">Dark</span>
<span class="t" style="left:529.70px;top:343.50px;font-size:27px;color:#000;transform:scaleX(1.0337);-webkit-text-stroke:0.2px #000;">Average</span>
<span class="t" style="left:61.02px;top:386.50px;font-size:27px;color:#000;transform:scaleX(0.9886);-webkit-text-stroke:0.2px #000;">Peace</span>
<span class="t" style="left:198.97px;top:386.50px;font-size:27px;color:#000;transform:scaleX(1.0136);-webkit-text-stroke:0.2px #000;">Female</span>
<span class="t" style="left:335.36px;top:386.50px;font-size:27px;color:#000;transform:scaleX(1.0178);-webkit-text-stroke:0.2px #000;">Fair</span>
<span class="t" style="left:529.70px;top:386.50px;font-size:27px;color:#000;transform:scaleX(1.0337);-webkit-text-stroke:0.2px #000;">Average</span>
<span class="t" style="left:63.00px;top:429.50px;font-size:27px;color:#000;transform:scaleX(1.0188);-webkit-text-stroke:0.2px #000;">Anita</span>
<span class="t" style="left:198.97px;top:429.50px;font-size:27px;color:#000;transform:scaleX(1.0136);-webkit-text-stroke:0.2px #000;">Female</span>
<span class="t" style="left:335.28px;top:429.50px;font-size:27px;color:#000;transform:scaleX(1.0619);-webkit-text-stroke:0.2px #000;">Light Brown</span>
<span class="t" style="left:528.97px;top:429.50px;font-size:27px;color:#000;transform:scaleX(1.0276);-webkit-text-stroke:0.2px #000;">Short</span>
<span class="t" style="left:62.00px;top:472.50px;font-size:27px;color:#000;-webkit-text-stroke:0.2px #000;">Chidera</span>
<span class="t" style="left:198.79px;top:472.50px;font-size:27px;color:#000;transform:scaleX(1.1026);-webkit-text-stroke:0.2px #000;">Male</span>
<span class="t" style="left:335.41px;top:472.50px;font-size:27px;color:#000;transform:scaleX(0.9950);-webkit-text-stroke:0.2px #000;">Black</span>
<span class="t" style="left:528.81px;top:472.50px;font-size:27px;color:#000;transform:scaleX(1.0968);-webkit-text-stroke:0.2px #000;">Medium</span>

<!-- window border -->
<div class="a" style="left:0;top:35px;width:1px;height:693px;background:#107c41"></div>
<div class="a" style="left:1096px;top:35px;width:1px;height:693px;background:#107c41"></div>
<div class="a" style="left:0;top:727px;width:1097px;height:1px;background:#107c41"></div>
</div></body></html>
